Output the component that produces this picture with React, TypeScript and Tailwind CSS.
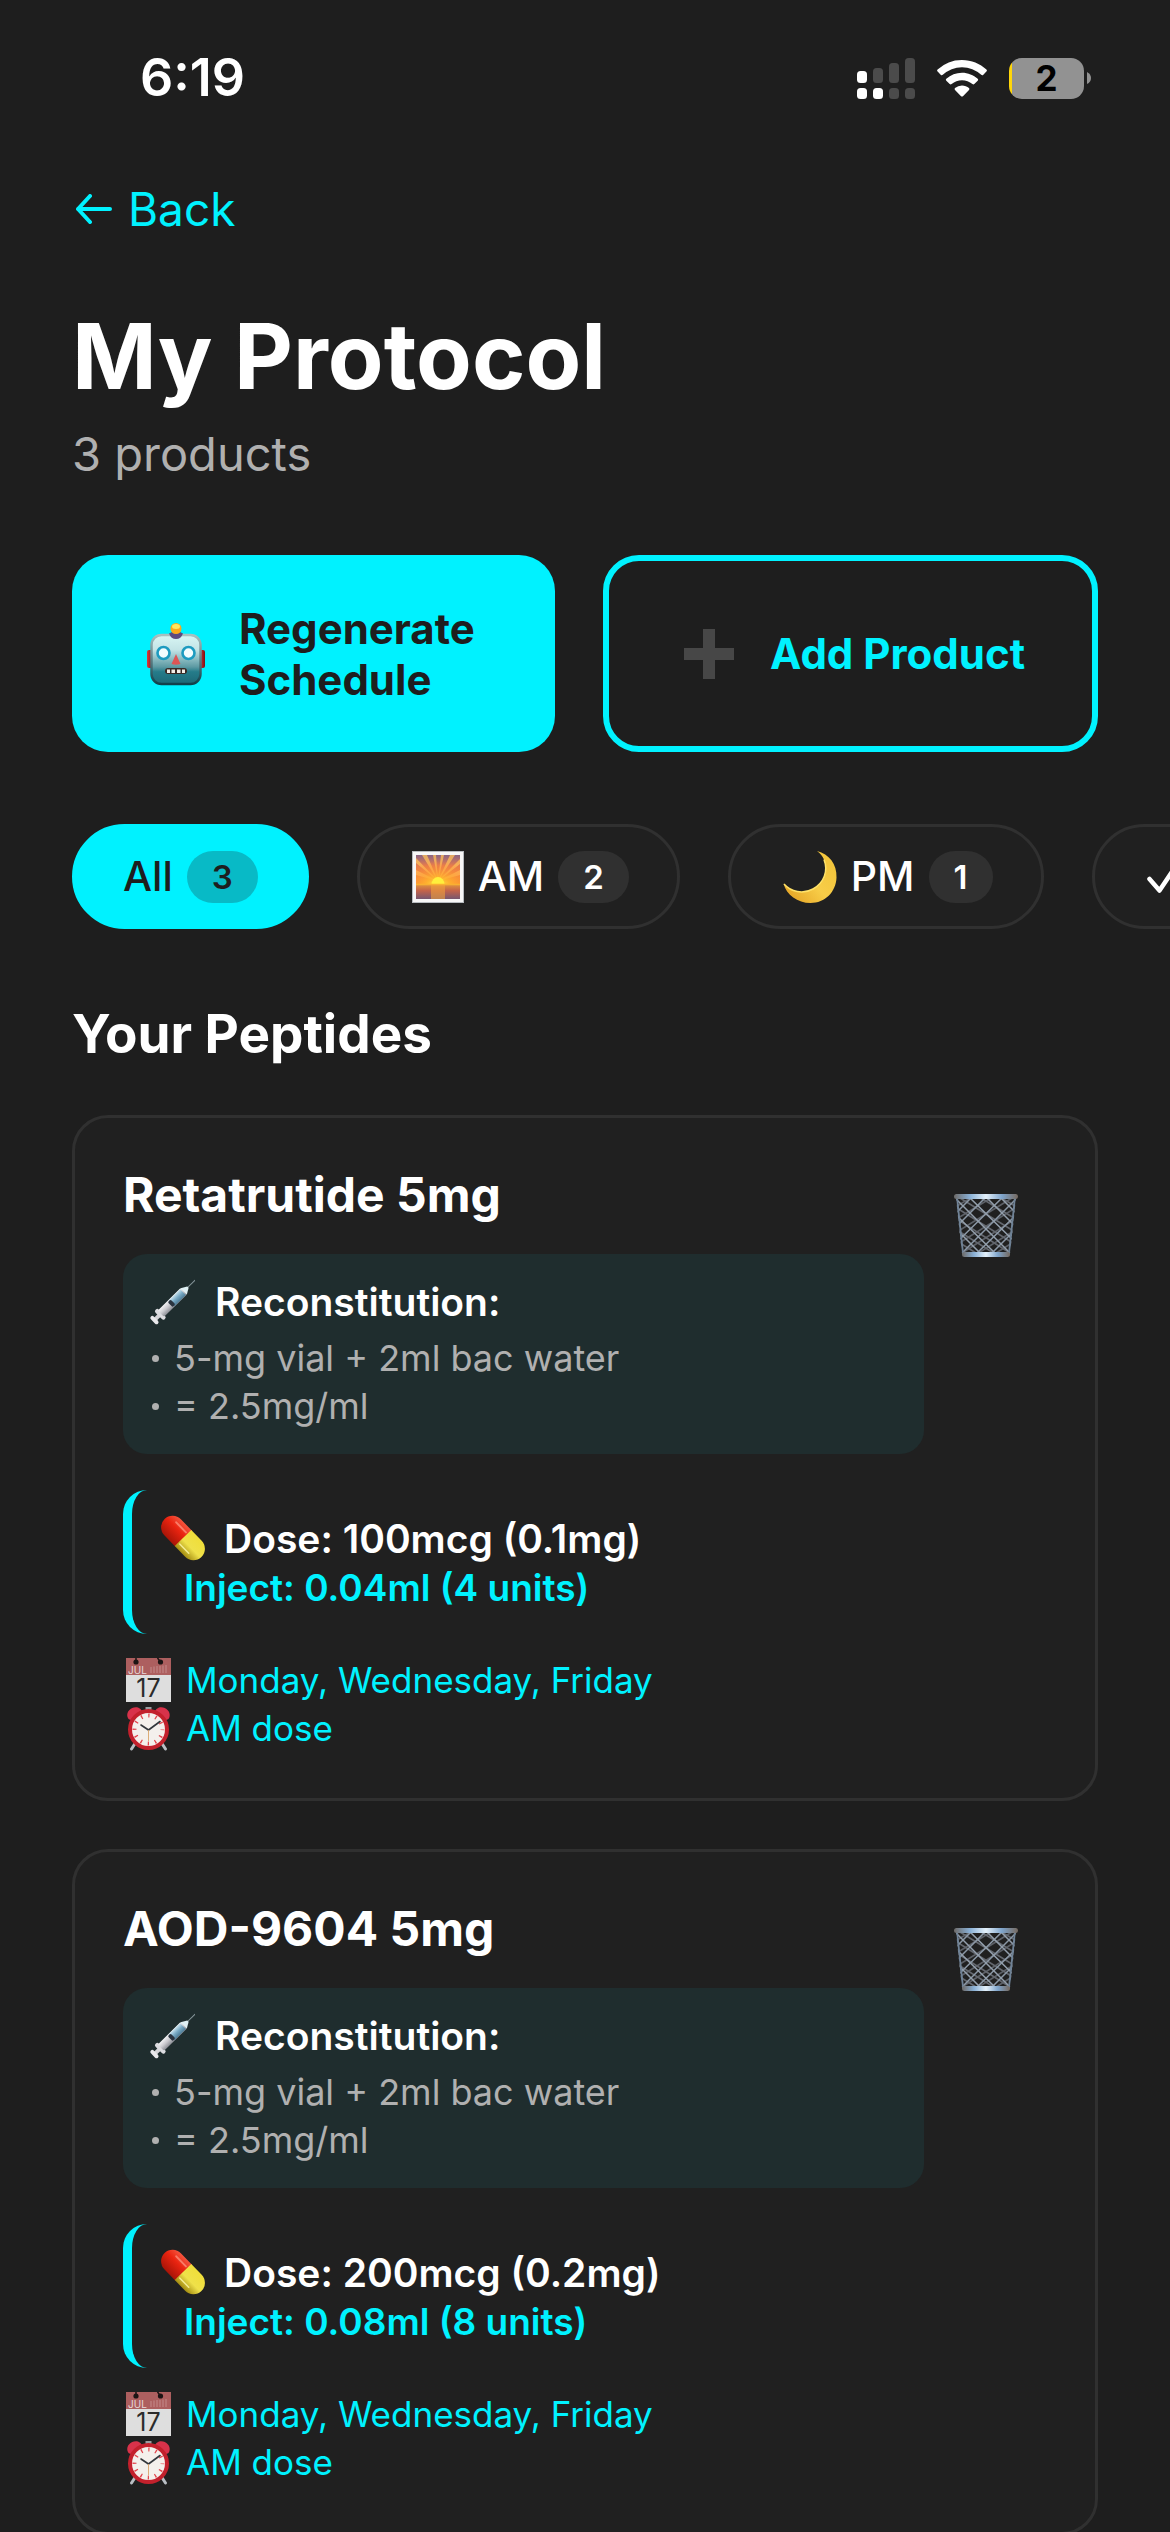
import React, { useState } from 'react';

interface Peptide {
  id: string;
  name: string;
  mix: string[];
  dose: string;
  inject: string;
  days: string;
  time: string;
}

const peptides: Peptide[] = [
  {
    id: 'reta',
    name: 'Retatrutide 5mg',
    mix: ['5-mg vial + 2ml bac water', '= 2.5mg/ml'],
    dose: '100mcg (0.1mg)',
    inject: '0.04ml (4 units)',
    days: 'Monday, Wednesday, Friday',
    time: 'AM dose',
  },
  {
    id: 'aod',
    name: 'AOD-9604 5mg',
    mix: ['5-mg vial + 2ml bac water', '= 2.5mg/ml'],
    dose: '200mcg (0.2mg)',
    inject: '0.08ml (8 units)',
    days: 'Monday, Wednesday, Friday',
    time: 'AM dose',
  },
];

const SignalIcon = () => (
  <svg width="58" height="41" viewBox="0 0 58 41" aria-hidden="true">
    <g fill="#fff">
      <rect x="0" y="13" width="10" height="12" rx="3.5" />
      <rect x="0" y="30" width="10" height="11" rx="3.5" />
      <rect x="16" y="30" width="10" height="11" rx="3.5" />
    </g>
    <g fill="#4b4b4b">
      <rect x="16" y="10" width="10" height="15" rx="3.5" />
      <rect x="32" y="5" width="10" height="20" rx="3.5" />
      <rect x="48" y="0" width="10" height="25" rx="3.5" />
      <rect x="32" y="30" width="10" height="11" rx="3.5" />
      <rect x="48" y="30" width="10" height="11" rx="3.5" />
    </g>
  </svg>
);

const WifiIcon = () => (
  <svg width="50" height="37" viewBox="0 0 50 37" fill="#fff" aria-hidden="true">
    <path d="M25 0C34.500 0 43 3.600 49.400 9.600Q50.400 10.600 49.400 11.600L46.100 14.900Q45.200 15.700 44.200 14.800A28 28 0 0 0 5.800 14.800Q4.800 15.700 3.900 14.900L0.600 11.600Q-0.400 10.600 0.600 9.600A35.500 35.500 0 0 1 25 0Z" />
    <path d="M25 12.700C31 12.700 36.500 15 40.700 18.800Q41.700 19.800 40.700 20.800L37.300 24.100Q36.400 24.900 35.400 24.100A16 16 0 0 0 14.600 24.100Q13.600 24.900 12.700 24.100L9.300 20.800Q8.300 19.800 9.300 18.800A23.500 23.500 0 0 1 25 12.700Z" />
    <path d="M25 25.500C27.700 25.500 30.100 26.400 32 28Q32.900 29 32 29.900L26.200 35.900Q25 37 23.800 35.900L18 29.900Q17.100 29 18 28A11 11 0 0 1 25 25.500Z" />
  </svg>
);

const RobotIcon = () => (
  <svg width="60" height="66" viewBox="0 0 60 66" className="shrink-0" aria-hidden="true">
    <defs>
      <linearGradient id="robotFace" x1="0" y1="0" x2="0" y2="1">
        <stop offset="0" stopColor="#d9f6f4" />
        <stop offset="0.3" stopColor="#c3e4e6" />
        <stop offset="0.65" stopColor="#5d9aa3" />
        <stop offset="0.75" stopColor="#257c8a" />
        <stop offset="1" stopColor="#1d6876" />
      </linearGradient>
      <linearGradient id="robotEdge" x1="0" y1="0" x2="0" y2="1">
        <stop offset="0" stopColor="#a8c0c0" />
        <stop offset="1" stopColor="#11404b" />
      </linearGradient>
      <linearGradient id="robotEar" x1="0" y1="0" x2="1" y2="0">
        <stop offset="0" stopColor="#e0393c" />
        <stop offset="1" stopColor="#7c1113" />
      </linearGradient>
    </defs>
    <rect x="1" y="29" width="6" height="18" rx="2" fill="url(#robotEar)" />
    <rect x="53" y="29" width="6" height="18" rx="2" fill="url(#robotEar)" />
    <rect x="5.500" y="14" width="49" height="49" rx="10" fill="url(#robotFace)" stroke="url(#robotEdge)" strokeWidth="2.500" />
    <path d="M23 12.500Q30 8 37 12.500Q35 18 30 18T23 12.500Z" fill="#5d4a80" />
    <circle cx="30" cy="7.500" r="5.500" fill="#fba91c" />
    <ellipse cx="30" cy="5.500" rx="4" ry="2.500" fill="#ffe85e" />
    <circle cx="17.500" cy="32" r="6" fill="#f2fdff" stroke="#1d9bc0" strokeWidth="2.600" />
    <circle cx="42.500" cy="32" r="6" fill="#f2fdff" stroke="#1d9bc0" strokeWidth="2.600" />
    <path d="M30 33L34.500 43Q30 44.500 25.500 43Z" fill="#dd5555" />
    <rect x="19" y="47" width="22" height="6" rx="3" fill="#3a2a26" />
    <path d="M21 48.500h3v3.500h-3zM25.500 48.500h3.500v3.500h-3.500zM31 48.500h3.500v3.500H31zM36 48.500h3v3.500h-3z" fill="#f5efe8" />
  </svg>
);

const SunriseIcon = () => (
  <svg width="52" height="52" viewBox="0 0 52 52" className="shrink-0" aria-hidden="true">
    <defs>
      <linearGradient id="dawnSky" x1="0" y1="0" x2="0" y2="1">
        <stop offset="0" stopColor="#8a6484" />
        <stop offset="0.35" stopColor="#e77c4c" />
        <stop offset="1" stopColor="#ff9a2b" />
      </linearGradient>
      <linearGradient id="dawnSea" x1="0" y1="0" x2="0" y2="1">
        <stop offset="0" stopColor="#dd9140" />
        <stop offset="0.4" stopColor="#c46349" />
        <stop offset="1" stopColor="#77566f" />
      </linearGradient>
      <radialGradient id="dawnGlow" cx="0.5" cy="1" r="0.8">
        <stop offset="0" stopColor="#fff04a" />
        <stop offset="0.35" stopColor="#ffb52e" stopOpacity="0.85" />
        <stop offset="1" stopColor="#ff7a3a" stopOpacity="0" />
      </radialGradient>
    </defs>
    <rect x="0.500" y="0.500" width="51" height="51" fill="#f7f7f7" stroke="#b8bcc0" />
    <rect x="4" y="4" width="44" height="31" fill="url(#dawnSky)" />
    <path
      d="M26 30L4 24V19ZM26 30L4 12V7ZM26 30L10 4H15ZM26 30L21 4H24ZM26 30L29 4H32ZM26 30L38 4H43ZM26 30L48 8V13ZM26 30L48 19V24Z"
      fill="#ffc05a"
      opacity="0.75"
    />
    <rect x="4" y="4" width="44" height="31" fill="url(#dawnGlow)" />
    <rect x="4" y="34" width="44" height="14" fill="url(#dawnSea)" />
    <rect x="19" y="34" width="14" height="14" fill="#f0a03c" opacity="0.6" />
    <path d="M19.500 33.500a6.500 7.500 0 0 1 13 0Z" fill="#ffef3c" />
    <path d="M4 33.500h44" stroke="#f9b032" strokeWidth="1.500" />
  </svg>
);

const MoonIcon = () => (
  <svg width="54" height="52" viewBox="0 0 54 52" className="shrink-0" aria-hidden="true">
    <defs>
      <linearGradient id="moonFill" x1="0.2" y1="0.9" x2="0.9" y2="0.3">
        <stop offset="0" stopColor="#e8ab2b" />
        <stop offset="0.5" stopColor="#f8cd48" />
        <stop offset="1" stopColor="#f3c63d" />
      </linearGradient>
    </defs>
    <path d="M34 0C46 3 54 13 53.500 26.500C53 41 42 52 27.500 52C14.500 52 3.500 44 .5 32.500C8 41 20 43.500 30 38C41 32 45.500 20 41 8.500C39.500 5 37 2 34 0Z" fill="url(#moonFill)" />
    <path d="M1 33C8 41 20 43.500 30 38C41 32 45.500 20 41 8.500" fill="none" stroke="#ffe268" strokeWidth="1.500" />
  </svg>
);

const CheckMark = () => (
  <svg width="36" height="36" viewBox="0 0 36 36" fill="none" aria-hidden="true">
    <path d="M2.500 20L12.500 31.500L31 4" stroke="#fff" strokeWidth="4.500" strokeLinecap="round" strokeLinejoin="round" />
  </svg>
);

const SyringeIcon = () => (
  <svg width="48" height="48" viewBox="0 0 48 48" className="shrink-0" aria-hidden="true">
    <defs>
      <linearGradient id="barrel" x1="0" y1="0" x2="0" y2="1">
        <stop offset="0" stopColor="#f3f3f5" />
        <stop offset="0.5" stopColor="#c9c9ce" />
        <stop offset="1" stopColor="#8b8d94" />
      </linearGradient>
      <linearGradient id="barrelBlue" x1="0" y1="0" x2="0" y2="1">
        <stop offset="0" stopColor="#c6e2ee" />
        <stop offset="0.5" stopColor="#78a9c4" />
        <stop offset="1" stopColor="#4e7d98" />
      </linearGradient>
    </defs>
    <g transform="translate(6 43.500) rotate(-44.500)">
      <path d="M46 0H59" stroke="#87979b" strokeWidth="1" />
      <rect x="2" y="-2" width="9" height="4" fill="#d5d5d9" />
      <rect x="0" y="-5" width="4" height="10" rx="2" fill="#e9e9ec" />
      <rect x="8" y="-6.500" width="4.500" height="13" rx="2" fill="#dcdce0" />
      <rect x="11" y="-4.500" width="33" height="9" rx="2" fill="url(#barrel)" />
      <rect x="26" y="-4" width="16" height="8" fill="url(#barrelBlue)" />
      <rect x="24" y="-3.500" width="4" height="7" rx="1.500" fill="#2b3440" />
      <path d="M43 -4.500L49 -1V1L43 4.500Z" fill="#dff0f4" />
    </g>
  </svg>
);

const PillIcon = () => (
  <svg width="48" height="48" viewBox="0 0 48 48" className="shrink-0" aria-hidden="true">
    <defs>
      <linearGradient id="pillRed" x1="0" y1="0" x2="0" y2="1">
        <stop offset="0" stopColor="#f4553e" />
        <stop offset="0.4" stopColor="#ea2410" />
        <stop offset="1" stopColor="#a81508" />
      </linearGradient>
      <linearGradient id="pillYellow" x1="0" y1="0" x2="0" y2="1">
        <stop offset="0" stopColor="#f0de3a" />
        <stop offset="0.55" stopColor="#efe14a" />
        <stop offset="1" stopColor="#a48d12" />
      </linearGradient>
    </defs>
    <g transform="translate(25 23) rotate(46)">
      <path d="M1 -11.500H-15a11.500 11.500 0 0 0 0 23H1Z" fill="url(#pillRed)" />
      <path d="M0 -11.500H15a11.500 11.500 0 0 1 0 23H0Z" fill="url(#pillYellow)" />
      <path d="M-16 -6H-2" stroke="#ff9a86" strokeWidth="2" strokeLinecap="round" opacity="0.7" />
      <path d="M2 6.500H15" stroke="#fffbb0" strokeWidth="1.500" strokeLinecap="round" opacity="0.8" />
    </g>
  </svg>
);

const CalendarIcon = () => (
  <svg width="45" height="44" viewBox="0 0 45 44" className="shrink-0 overflow-visible" aria-hidden="true">
    <rect width="45" height="44" fill="#dedede" />
    <rect width="45" height="17" fill="#ad5f5f" />
    <circle cx="10" cy="4" r="2.600" fill="#1c1414" />
    <circle cx="34.500" cy="4" r="2.600" fill="#1c1414" />
    <path d="M10 4V0M34.500 4L31.500 0" stroke="#1c1414" strokeWidth="1.500" />
    <path d="M25 9v6M28 8.500v6.500M31 8v7M34 8v7M37 7.500v7.500M40 7v8" stroke="#d0a0a0" strokeWidth="0.700" />
    <text x="2" y="15.500" fontSize="10" fontFamily="Inter, sans-serif" fill="#e6d8d8">JUL</text>
    <text x="22.500" y="39" fontSize="25" textAnchor="middle" fontFamily="Inter, sans-serif" fill="#2b2b2b">17</text>
  </svg>
);

const ClockIcon = () => (
  <svg width="45" height="45" viewBox="0 0 45 45" className="shrink-0" aria-hidden="true">
    <path d="M10 36L5.500 43M35 36L39.500 43" stroke="#b9bec4" strokeWidth="3" strokeLinecap="round" />
    <path d="M19.500 1h6v4h-6z" fill="#9a9da1" />
    <path d="M1.500 11C0 5 6 0 12 1.500Q15 2.500 16 5L4.500 14Q2 13.500 1.500 11Z" fill="#d8324a" />
    <path d="M43.500 11C45 5 39 0 33 1.500Q30 2.500 29 5L40.500 14Q43 13.500 43.500 11Z" fill="#d8324a" />
    <circle cx="22.500" cy="23.500" r="18.500" fill="#f4f0ec" stroke="#c3202c" strokeWidth="4" />
    <circle cx="22.500" cy="23.500" r="14" fill="none" stroke="#e2444c" strokeWidth="4" strokeDasharray="1.300 6.030" strokeDashoffset="0.650" />
    <path d="M15 19L22.500 24L34 15.500" fill="none" stroke="#33373c" strokeWidth="1.600" strokeLinecap="round" strokeLinejoin="round" />
    <path d="M22.500 24V35" stroke="#d9a56a" strokeWidth="0.900" />
  </svg>
);

const TrashIcon = () => (
  <svg width="64" height="66" viewBox="0 0 64 66" aria-hidden="true">
    <defs>
      <linearGradient id="rim" x1="0" y1="0" x2="1" y2="0">
        <stop offset="0" stopColor="#6d6a68" />
        <stop offset="0.25" stopColor="#89b0d6" />
        <stop offset="0.5" stopColor="#e4f1fb" />
        <stop offset="0.75" stopColor="#7ea4cb" />
        <stop offset="1" stopColor="#76695f" />
      </linearGradient>
      <clipPath id="bin">
        <path d="M2 5H62L56 62H8Z" />
      </clipPath>
    </defs>
    <g clipPath="url(#bin)" fill="none">
      <path
        d="M-6 18L22 2M-4 30L42 2M-2 42L58 5M2 52L66 12M8 60L66 23M18 64L66 34M34 65L66 45"
        stroke="#5b5f66"
        strokeWidth="1.700"
      />
      <path
        d="M70 18L42 2M68 30L22 2M66 42L6 5M62 52L-2 12M56 60L-2 23M46 64L-2 34M30 65L-2 45"
        stroke="#63676e"
        strokeWidth="1.700"
      />
      <path d="M-2 24L20 2M0 36L33 3M2 50L50 3M8 60L62 6M20 63L64 20M34 64L62 36" stroke="#8b98a6" strokeWidth="1.500" />
      <path d="M66 24L44 2M64 36L31 3M62 50L14 3M56 60L2 6M44 63L0 20M30 64L2 36" stroke="#939fac" strokeWidth="1.500" />
      <path d="M3 5L9 61M61 5L55 61" stroke="#6f8296" strokeWidth="2" />
    </g>
    <rect x="0" y="1" width="64" height="5" rx="2.500" fill="url(#rim)" />
    <rect x="8" y="59" width="48" height="5" rx="2.500" fill="url(#rim)" />
  </svg>
);

const StatusBar = () => (
  <header className="flex h-[156px] items-center justify-between pl-[140px] pr-[79px]">
    <span className="text-[52px] leading-[60px] font-semibold text-white">6:19</span>
    <div className="flex items-center gap-[22px]">
      <SignalIcon />
      <WifiIcon />
      <div className="flex items-center gap-[3px]">
        <div className="flex h-[41px] w-[75px] items-center justify-center overflow-hidden rounded-[13px] bg-linear-to-r from-[#ffd60a] from-4% to-[#929292] to-4%">
          <span className="text-[35px] leading-[41px] font-bold text-black">2</span>
        </div>
        <svg width="4" height="12" viewBox="0 0 4 12" aria-hidden="true">
          <path d="M0 0Q4 2 4 6T0 12Z" fill="#929292" />
        </svg>
      </div>
    </div>
  </header>
);

interface FilterChipProps {
  label?: string;
  count?: number;
  icon?: React.ReactNode;
  active: boolean;
  onClick: () => void;
}

const FilterChip: React.FC<FilterChipProps> = ({ label, count, icon, active, onClick }) => (
  <button
    type="button"
    aria-pressed={active}
    aria-label={label ? undefined : 'Done'}
    onClick={onClick}
    className={`flex h-[105px] shrink-0 items-center rounded-full border-[3px] px-[48px] text-[41px] leading-[51px] font-medium ${
      active ? 'border-[#00f2ff] bg-[#00f2ff] text-[#1e1e1e]' : 'border-[#303030] bg-[#202020] text-white'
    }`}
  >
    {icon && <span className="mx-[4px] shrink-0">{icon}</span>}
    {label && <span className={icon ? 'ml-[10px]' : ''}>{label}</span>}
    {count !== undefined && (
      <span
        className={`ml-[14px] rounded-full px-[25px] text-[33px] leading-[52px] font-semibold ${
          active ? 'bg-[#08bac6]' : 'bg-[#303030]'
        }`}
      >
        {count}
      </span>
    )}
  </button>
);

const PeptideCard: React.FC<{ item: Peptide }> = ({ item }) => (
  <article className="rounded-[36px] border-[3px] border-[#303030] bg-[#202020] px-[48px] pt-[48px] pb-[46px]">
    <div className="flex items-start">
      <div className="min-w-0 flex-1">
        <h3 className="text-[48px] leading-[58px] font-bold text-white">{item.name}</h3>

        {/* Mixing instructions */}
        <div className="mt-[30px] rounded-[24px] bg-[#1f2d2e] p-[24px]">
          <div className="flex items-center gap-[20px] text-[39px] leading-[48px] font-semibold text-white">
            <SyringeIcon />
            <span>Reconstitution:</span>
          </div>
          <ul className="mt-[8px] text-[36px] leading-[48px] text-[#b0b0b0]">
            {item.mix.map((line) => (
              <li key={line} className="flex items-center gap-[15px] pl-[5px]">
                <span className="size-[7px] rounded-full bg-[#b0b0b0]" />
                {line}
              </li>
            ))}
          </ul>
        </div>

        {/* Dose */}
        <div className="mt-[36px] rounded-[24px] border-l-[9px] border-[#00f2ff] pt-[24px] pb-[22px] pl-[26px]">
          <div className="flex items-center gap-[18px] text-[39px] leading-[50px] font-semibold text-white">
            <PillIcon />
            <span>Dose: {item.dose}</span>
          </div>
          <p className="pl-[26px] text-[37px] leading-[48px] font-semibold text-[#00f2ff]">Inject: {item.inject}</p>
        </div>

        {/* Schedule */}
        <div className="mt-[22px] pl-[3px] text-[35px] leading-[48px] text-[#00f2ff]">
          <div className="flex items-center gap-[15px]">
            <CalendarIcon />
            <span>{item.days}</span>
          </div>
          <div className="flex items-center gap-[15px]">
            <ClockIcon />
            <span>{item.time}</span>
          </div>
        </div>
      </div>

      <button type="button" aria-label={`Delete ${item.name}`} className="flex h-[120px] w-[123px] shrink-0 items-center justify-center">
        <TrashIcon />
      </button>
    </div>
  </article>
);

const App: React.FC = () => {
  const [filter, setFilter] = useState('all');

  return (
    <div className="h-screen overflow-x-hidden overflow-y-auto bg-[#1e1e1e] font-['Inter',sans-serif] [scrollbar-width:none]">
      <StatusBar />

      <main className="px-[72px] pb-[48px]">
        <a href="#back" className="mt-[23px] flex w-fit items-center gap-[15px] text-[46px] leading-[60px] text-[#00f2ff]">
          <svg width="38" height="30" viewBox="0 0 38 30" fill="none" className="ml-[3px]" aria-hidden="true">
            <path d="M15 2L3 15L15 28M3 15H35" stroke="#00f2ff" strokeWidth="4" strokeLinecap="round" strokeLinejoin="round" />
          </svg>
          Back
        </a>

        <h1 className="mt-[60px] text-[91px] leading-[114px] font-bold text-white">My Protocol</h1>
        <p className="mt-[11px] text-[47px] leading-[60px] text-[#b0b0b0]">3 products</p>

        <div className="mt-[71px] grid grid-cols-[483fr_495fr] gap-[48px]">
          <button
            type="button"
            className="flex h-[197px] items-center gap-[33px] rounded-[36px] bg-[#00f2ff] pl-[74px] text-left text-[42px] leading-[51px] font-bold text-[#1e1e1e]"
          >
            <RobotIcon />
            <span>
              Regenerate
              <br />
              Schedule
            </span>
          </button>
          <button
            type="button"
            className="flex h-[197px] items-center gap-[36px] rounded-[36px] border-[6px] border-[#00f2ff] pl-[75px] text-[42px] leading-[51px] font-bold text-[#00f2ff]"
          >
            <svg width="50" height="50" viewBox="0 0 50 50" className="shrink-0" aria-hidden="true">
              <path d="M19 0h12v19h19v12H31v19H19V31H0V19h19z" fill="#474747" />
            </svg>
            <span className="whitespace-nowrap">Add Product</span>
          </button>
        </div>

        <div className="mt-[72px] -mr-[72px] flex gap-[48px] overflow-x-auto [scrollbar-width:none]">
          <FilterChip label="All" count={3} active={filter === 'all'} onClick={() => setFilter('all')} />
          <FilterChip label="AM" count={2} icon={<SunriseIcon />} active={filter === 'am'} onClick={() => setFilter('am')} />
          <FilterChip label="PM" count={1} icon={<MoonIcon />} active={filter === 'pm'} onClick={() => setFilter('pm')} />
          <FilterChip icon={<CheckMark />} active={filter === 'done'} onClick={() => setFilter('done')} />
        </div>

        <h2 className="mt-[72px] text-[53px] leading-[66px] font-bold text-white">Your Peptides</h2>

        <section className="mt-[48px] flex flex-col gap-[48px]">
          {peptides.map((item) => (
            <PeptideCard key={item.id} item={item} />
          ))}
        </section>
      </main>
    </div>
  );
};

export default App;
